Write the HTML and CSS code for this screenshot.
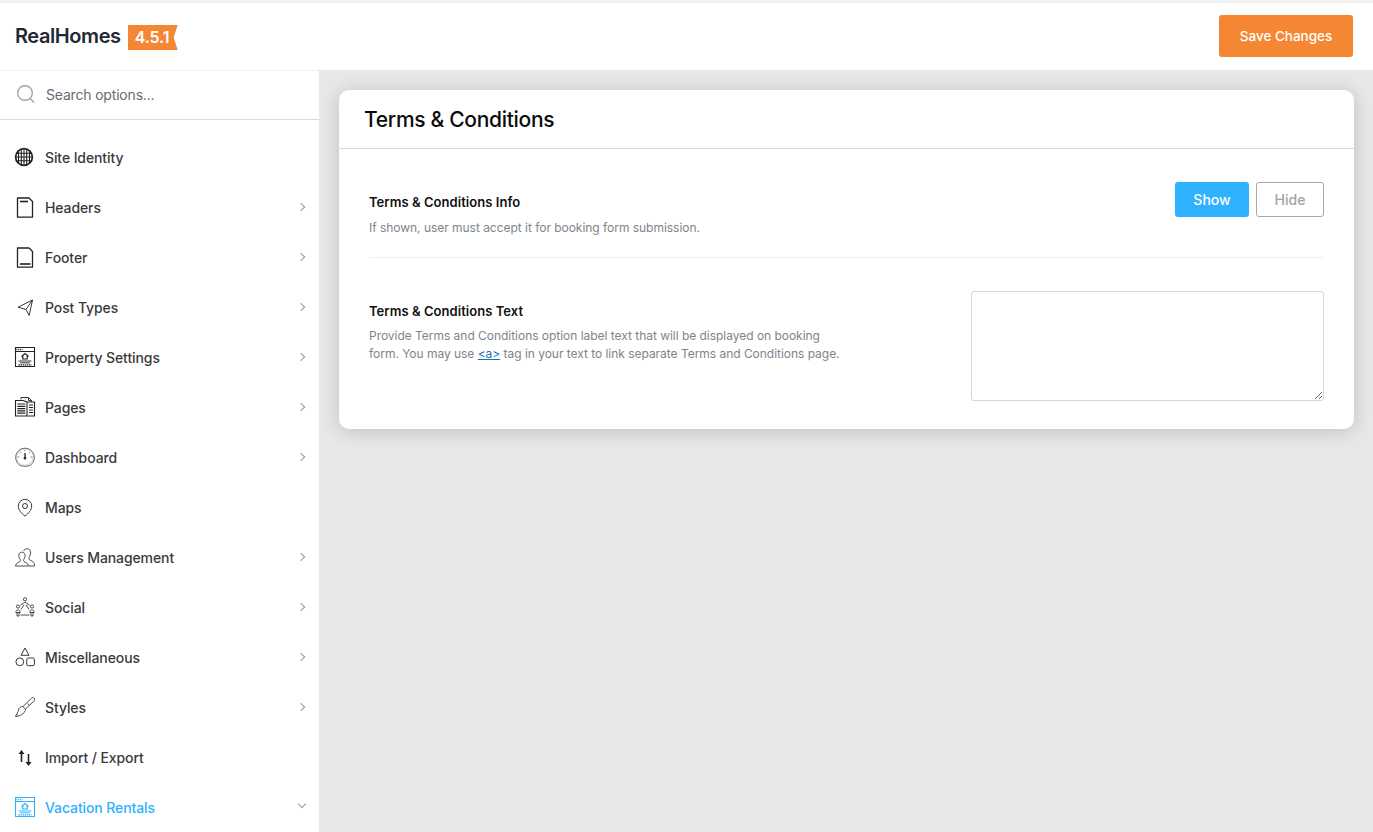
FILE: index.html
```html
<!DOCTYPE html>
<html lang="en">
<head>
  <meta charset="UTF-8" />
  <title>RealHomes Options</title>
  <link rel="stylesheet" href="styles.css">
</head>
<body>

  <!-- TOP BAR -->
  <header class="topbar">
    <div class="brand">
      <span class="brand-name">RealHomes</span>
      <span class="version">4.5.1</span>
    </div>
    <button class="save-btn" type="button">Save Changes</button>
  </header>

  <div class="layout">
    <!-- SIDEBAR -->
    <aside class="sidebar">
      <div class="search">
        <svg class="search-icon" viewBox="0 0 20 20" width="20" height="20"><circle cx="9" cy="9" r="7.3"/><path d="M14.2 14.4 18 18.4"/></svg>
        <span>Search options...</span>
      </div>
      <nav class="menu">
        <a class="menu-item">
          <svg class="icon" viewBox="0 0 20 20"><circle cx="9" cy="10" r="8.400" stroke-width="1.700"/><path d="M6.300 2v16M11.700 2v16M9 1.600v16.800M3.500 3.500v13M14.500 3.500v13M.6 10h16.800M1.500 6.200h15M1.500 13.800h15" stroke-width="1.100"/></svg>
          <span>Site Identity</span>
        </a>
        <a class="menu-item has-sub">
          <svg class="icon" viewBox="0 0 20 20"><path d="M2.500 1h11.500l3.500 3.500V20.200H2.500z" stroke-width="1.300" stroke-linejoin="round"/><path d="M5 4.500h8" stroke-width="1.600"/></svg>
          <span>Headers</span>
        </a>
        <a class="menu-item has-sub">
          <svg class="icon" viewBox="0 0 20 20"><path d="M2.500 1h11.500l3.500 3.500V20.200H2.500z" stroke-width="1.300" stroke-linejoin="round"/><path d="M5 17h10.500" stroke-width="1.600"/></svg>
          <span>Footer</span>
        </a>
        <a class="menu-item has-sub">
          <svg class="icon" viewBox="0 0 20 20"><path d="M17.500 3 3 10.200l8 2.300 3.200 6zM11 12.500l6.500-9.500" stroke-width=".9" stroke-linejoin="round"/></svg>
          <span>Post Types</span>
        </a>
        <a class="menu-item has-sub">
          <svg class="icon" viewBox="0 0 20 20"><path d="M.5.500h19v19H.5zM.5 4.500h19" stroke-width="1.100"/><path d="M1.500 2.500h6" stroke-dasharray="1 .8" stroke-width="1.500"/><path d="M6.500 9.500 10 6.500l3.500 3M7.800 9v3h4.400V9" stroke-width="1.200"/><path d="M3.500 14h13M5 15.800h10"/><path d="M3.500 17.800h13" stroke-dasharray="1.500 .6" stroke-width="1.200"/></svg>
          <span>Property Settings</span>
        </a>
        <a class="menu-item has-sub">
          <svg class="icon" viewBox="0 0 20 20"><path d="M6 2.500V.5h7.500L16.500 3.500v1.500M13.500.5v3h3"/><path d="M.5 3.500H8l4 1.500v14H.5z" stroke-width="1.100"/><path d="M2.300 7h8M2.300 9.300h8M2.300 11.600h8M2.300 13.900h8M2.300 16.200h8" stroke-width="1.200"/><path d="M12.500 5h7v14h-7M14 8h4M14 10.500h4M14 13h4M14 15.500h4" stroke-width="1.100"/></svg>
          <span>Pages</span>
        </a>
        <a class="menu-item has-sub">
          <svg class="icon" viewBox="0 0 20 20"><path d="M5 18.500a9.400 9.400 0 1 1 10 0c-3 1-7 1-10 0z" stroke="#555"/><path d="M10 2.800v1.500M2.800 10h1.500M15.700 10h1.500M5 5l1 1M15 5l-1 1" stroke="#555" stroke-width=".8"/><path d="M10 6v4.500" stroke-width="1.300"/><circle cx="10" cy="11.200" r="1" fill="#222"/><circle cx="10" cy="10" r="8.200" stroke="#777" stroke-dasharray=".8 1.200" stroke-width=".8"/></svg>
          <span>Dashboard</span>
        </a>
        <a class="menu-item">
          <svg class="icon" viewBox="0 0 20 20"><path d="M10 19.200c-3-2.500-6.700-6-6.700-10.200a6.700 6.700 0 0 1 13.400 0c0 4.200-3.700 7.700-6.700 10.200z"/><circle cx="10" cy="9" r="2.500"/></svg>
          <span>Maps</span>
        </a>
        <a class="menu-item has-sub">
          <svg class="icon" viewBox="0 0 20 20"><path d="M.5 19c.2-3 3-3.200 4.500-4.500.8-.8.500-1.800 0-2.500C3.800 10.500 3.500 8.500 4 7c.8-2 4-2.500 5.500-.5 1 1.500.8 4-.5 5.500-.6.800-.8 1.800 0 2.500 1.500 1.300 4.300 1.500 4.500 4.500z" stroke-width=".8"/><path d="M8.500 4C9.500 1.500 13 1 14.800 3c1.200 1.500 1 4.500-.3 6.500-.6.900-.8 2.500 0 3.200 1.500 1.300 4.800 1.500 5 4.800V19h-5.500" stroke-width=".8"/></svg>
          <span>Users Management</span>
        </a>
        <a class="menu-item has-sub">
          <svg class="icon" viewBox="0 0 20 20"><circle cx="10" cy="2.300" r="1.600" stroke-width=".8"/><path d="M7.500 7.500C7.500 4.800 12.500 4.800 12.500 7.500" stroke-width=".8"/><circle cx="3" cy="9.500" r="1.600" stroke-width=".8"/><circle cx="17" cy="9.500" r="1.600" stroke-width=".8"/><path d="M.8 15.500c0-3.500 4.400-3.500 4.400 0zM14.800 15.500c0-3.500 4.400-3.500 4.400 0zM2 15.500v3.500h2v-3.500M16 15.500v3.500h2v-3.500M5.500 18h9M5.800 12.500 9 8M14.200 12.500 11 8M5.500 8.300 7.500 6.800M14.500 8.300l-2-1.500" stroke-width=".8"/></svg>
          <span>Social</span>
        </a>
        <a class="menu-item has-sub">
          <svg class="icon" viewBox="0 0 20 20"><path d="M10 1 14 8.300H6z"/><circle cx="4.800" cy="14.800" r="3.900"/><rect x="11.700" y="11" width="7.700" height="7.700" rx="1.500"/></svg>
          <span>Miscellaneous</span>
        </a>
        <a class="menu-item has-sub">
          <svg class="icon" viewBox="0 0 20 20"><path d="M19.200 1.200c-.8-.9-2-.6-2.800.2L8 9.500l2.500 2.500 8.300-7.800c.8-.8 1.100-2.100.4-3zM8 9.500c-2.500 0-4 1.300-4.500 3.500-.4 2-1.500 3.700-3 6.500 3.500 0 7-1.800 9-4.500.8-1 1.100-2 1-3" stroke-width=".8"/><path d="M13 6.500l1 1.500" stroke-width=".8"/><path d="M1.500 17l1.500 1.500" stroke-dasharray="1 1"/></svg>
          <span>Styles</span>
        </a>
        <a class="menu-item">
          <svg class="icon" viewBox="0 0 20 20"><path d="M6.500 6v9M13.500 7v9" stroke-width="1.600"/><path d="M3.500 7 6.500 3l3 4zM10.500 15l3 4 3-4z" fill="#222" stroke="none"/></svg>
          <span>Import / Export</span>
        </a>
        <a class="menu-item active">
          <svg class="icon" viewBox="0 0 20 20"><path d="M.5.500h19v19H.5zM.5 4.500h19" stroke-width="1.100"/><path d="M1.500 2.500h6" stroke-dasharray="1 .8" stroke-width="1.500"/><path d="M6.500 9.500 10 6.500l3.500 3M7.800 9v3h4.400V9" stroke-width="1.200"/><path d="M3.500 14h13M5 15.800h10"/><path d="M3.500 17.800h13" stroke-dasharray="1.500 .6" stroke-width="1.200"/></svg>
          <span>Vacation Rentals</span>
        </a>
      </nav>
    </aside>

    <!-- CONTENT -->
    <main class="content">
      <section class="card">
        <h1 class="card-title">Terms &amp; Conditions</h1>
        <div class="card-body">
          <div class="option option-info">
            <div class="option-text">
              <h3>Terms &amp; Conditions Info</h3>
              <p>If shown, user must accept it for booking form submission.</p>
            </div>
            <div class="toggle">
              <button class="toggle-btn show" type="button">Show</button>
              <button class="toggle-btn hide" type="button">Hide</button>
            </div>
          </div>
          <div class="option option-textarea">
            <div class="option-text">
              <h3>Terms &amp; Conditions Text</h3>
              <p>
                <span class="desc-line">Provide Terms and Conditions option label text that will be displayed on booking</span>
                <span class="desc-line">form. You may use <a href="#">&lt;a&gt;</a> tag in your text to link separate Terms and Conditions page.</span>
              </p>
            </div>
            <textarea class="textarea"></textarea>
          </div>
        </div>
      </section>
    </main>
  </div>

</body>
</html>
```

FILE: styles.css
```css
html, body {
  height: 100%;
  overflow: hidden;
}

body {
  font-family: Inter, "Liberation Sans", sans-serif;
  margin: 0;
  background: #e8e8e8;
  color: #2f2f2f;
  display: flex;
  flex-direction: column;
  border-top: 3px solid #f0f0f0;
  box-sizing: border-box;
}

/* TOP BAR */
.topbar {
  background: #fff;
  height: 67px;
  flex: none;
  display: flex;
  justify-content: space-between;
  align-items: center;
  padding: 0 20px 0 15px;
}

.brand {
  display: flex;
  align-items: center;
  gap: 7px;
}

.brand-name {
  font-size: 20px;
  font-weight: 600;
  letter-spacing: -0.42px;
  margin-bottom: 2px;
  color: #1f2933;
}

.version {
  background: #f58634;
  color: #fff;
  font-size: 16px;
  font-weight: 600;
  width: 50px;
  height: 25px;
  line-height: 25px;
  margin-top: 2px;
  padding-left: 7px;
  box-sizing: border-box;
  letter-spacing: -0.1px;
  clip-path: polygon(0 0, 100% 0, 92% 50%, 100% 100%, 0 100%);
}

.save-btn {
  background: #f58634;
  color: #fff;
  border: none;
  border-radius: 3px;
  width: 134px;
  height: 42px;
  margin-top: -2px;
  font: 500 13.5px Inter, "Liberation Sans", sans-serif;
}

.layout {
  flex: 1;
  display: flex;
  min-height: 0;
}

/* SIDEBAR */
.sidebar {
  width: 319px;
  flex: none;
  background: #fff;
  border-top: 1px solid #f2f2f2;
  overflow: hidden;
}

.search {
  height: 46px;
  padding-bottom: 2px;
  display: flex;
  align-items: center;
  gap: 10px;
  padding-left: 16px;
  border-bottom: 1px solid #dcdcdc;
  font-size: 14px;
  letter-spacing: -0.18px;
  color: #666b72;
}

.search-icon {
  fill: none;
  stroke: #a5a5a5;
  stroke-width: 1.4;
}

.menu {
  padding-top: 12px;
}

.menu-item {
  height: 50px;
  display: flex;
  align-items: center;
  gap: 10px;
  padding-left: 15px;
  font-size: 14px;
  font-weight: 500;
  letter-spacing: -0.1px;
  color: #3a3a3c;
  position: relative;
}

.icon {
  width: 20px;
  height: 20px;
  flex: none;
  fill: none;
  stroke: #222;
  stroke-width: 0.9;
  overflow: visible;
}

.has-sub::after,
.active::after {
  content: "";
  position: absolute;
  right: 15px;
  top: 22px;
  width: 5px;
  height: 5px;
  border-top: 1.5px solid #9a9a9a;
  border-right: 1.5px solid #9a9a9a;
  transform: rotate(45deg);
}

.menu-item.active {
  color: #2eb1ff;
}

.active .icon {
  stroke: #2eb1ff;
}

.active::after {
  right: 14px;
  top: 19px;
  transform: rotate(135deg);
}

/* CONTENT */
.content {
  flex: 1;
  padding: 20px 19px 0 20px;
}

.card {
  background: #fff;
  border-radius: 10px;
  box-shadow: 0 2px 20px rgba(0,0,0,0.18);
  height: 339px;
}

.card-title {
  margin: 0;
  height: 57px;
  padding-top: 1px;
  line-height: 58px;
  padding-left: 25px;
  font-size: 21px;
  font-weight: 500;
  letter-spacing: -0.3px;
  color: #0b0b0b;
  border-bottom: 1px solid #d9d9d9;
}

.card-body {
  padding: 0 30px;
}

.option {
  display: flex;
  justify-content: space-between;
}

.option-info {
  height: 109px;
  padding-top: 33px;
  box-sizing: border-box;
  border-bottom: 1px solid #efefef;
}

.option-textarea {
  padding-top: 33px;
}

.option-text h3 {
  margin: 0;
  font-size: 13px;
  line-height: 20px;
  font-weight: 600;
  letter-spacing: 0.05px;
  color: #111;
  padding-top: 10px;
}

.option-text p {
  margin: 6px 0 0;
  font-size: 12px;
  line-height: 18px;
  letter-spacing: -0.03px;
  color: #80848a;
}

.option-info .option-text p {
  margin-top: 7px;
}

.desc-line {
  display: block;
}

.option-text a {
  color: #1f6fb5;
}

.toggle {
  display: flex;
  gap: 7px;
}

.toggle-btn {
  height: 35px;
  border-radius: 3px;
  font: 500 14px Inter, "Liberation Sans", sans-serif;
  padding: 0;
}

.show {
  width: 74px;
  background: #2eb1ff;
  color: #fff;
  border: none;
}

.hide {
  width: 68px;
  background: #fff;
  color: #a3a3a3;
  border: 1px solid #a8a8a8;
}

.textarea {
  width: 353px;
  height: 110px;
  box-sizing: border-box;
  border: 1px solid #d6d6d6;
  border-radius: 3px;
  background: #fff;
  margin: 0;
}
```
